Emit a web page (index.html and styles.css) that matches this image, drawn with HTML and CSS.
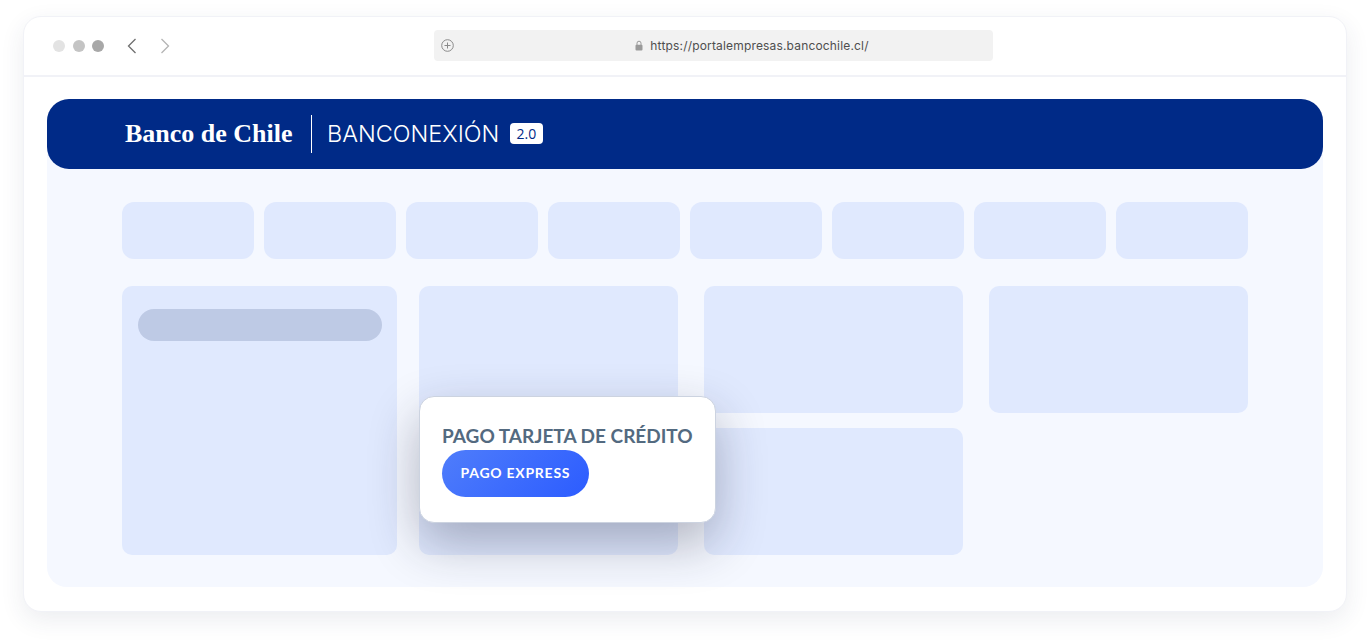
FILE: index.html
```html
<!DOCTYPE html>
<html lang="es">
<head>
  <meta charset="UTF-8">
  <meta name="viewport" content="width=device-width, initial-scale=1.0">
  <title>Banconexión 2.0</title>
  <link rel="stylesheet" href="styles.css">
</head>
<body>
  <div class="browser">
    <div class="toolbar">
      <div class="dots">
        <span class="dot dot-light"></span>
        <span class="dot dot-mid"></span>
        <span class="dot dot-dark"></span>
      </div>
      <div class="nav">
        <svg class="nav-back" width="10" height="16" viewBox="0 0 10 16"><path d="M8.5 1 1.5 8l7 7" fill="none" stroke="#6f6f6f" stroke-width="1.3"/></svg>
        <svg class="nav-next" width="10" height="16" viewBox="0 0 10 16"><path d="M1.5 1l7 7-7 7" fill="none" stroke="#b4b4b4" stroke-width="1.3"/></svg>
      </div>
      <div class="address">
        <svg class="address-plus" width="13" height="13" viewBox="0 0 13 13"><circle cx="6.5" cy="6.5" r="5.8" fill="none" stroke="#8a8a8a" stroke-width="1"/><path d="M6.5 3.5v6M3.5 6.5h6" stroke="#8a8a8a" stroke-width="1"/></svg>
        <div class="address-url">
          <svg width="8" height="11" viewBox="0 0 8 11"><path d="M2 5V3.2a2 2 0 0 1 4 0V5" fill="none" stroke="#9a9a9a" stroke-width="1"/><rect x="0.5" y="4.8" width="7" height="5.7" rx="1" fill="#9a9a9a"/></svg>
          <span>https://portalempresas.bancochile.cl/</span>
        </div>
      </div>
    </div>

    <div class="app">
      <header class="app-header">
        <span class="bank-name">Banco de Chile</span>
        <span class="header-sep"></span>
        <span class="product-name">BANCONEXIÓN</span>
        <span class="version">2.0</span>
      </header>

      <div class="app-body">
        <div class="tabs">
          <div class="tab"></div>
          <div class="tab"></div>
          <div class="tab"></div>
          <div class="tab"></div>
          <div class="tab"></div>
          <div class="tab"></div>
          <div class="tab"></div>
          <div class="tab"></div>
        </div>

        <div class="content">
          <div class="block sidebar">
            <div class="pill"></div>
          </div>
          <div class="cards">
            <div class="block block-tall">
              <div class="popup">
                <h3 class="popup-title">PAGO TARJETA DE CRÉDITO</h3>
                <a class="popup-btn">PAGO EXPRESS</a>
              </div>
            </div>
            <div class="block"></div>
            <div class="block"></div>
            <div class="block"></div>
          </div>
        </div>
      </div>
    </div>
  </div>
</body>
</html>
```

FILE: styles.css
```css
:root {
  --frame-line: #f1f2f7;
  --panel-bg: #f5f8ff;
  --block-bg: #e0e9fe;
  --navy: #002a87;
}
* { box-sizing: border-box; }
html, body { height: 100%; }
body {
  margin: 0;
  padding: 16px 23px 0;
  background: #fff;
  overflow: hidden;
  font-family: "Liberation Sans", Arial, sans-serif;
}
.browser {
  height: 596px;
  background: #fff;
  border: 1px solid var(--frame-line);
  border-radius: 18px;
  box-shadow: 0 8px 24px rgba(40, 50, 90, 0.09);
}
.toolbar {
  display: flex;
  align-items: center;
  height: 60px;
  padding: 0 29px;
  border-bottom: 2px solid var(--frame-line);
  position: relative;
}
.dots { display: flex; gap: 7.5px; }
.dot { width: 12px; height: 12px; border-radius: 50%; }
.dot-light { background: #e3e3e3; }
.dot-mid { background: #c4c4c4; }
.dot-dark { background: #a8a8a8; }
.nav { display: flex; gap: 23px; margin-left: 22.5px; }
.nav svg { display: block; }
.address {
  display: flex;
  align-items: center;
  justify-content: center;
  width: 559px;
  height: 31px;
  margin: 0 0 2px 264px;
  padding-left: 78px;
  background: #f2f2f2;
  border-radius: 4px;
  position: relative;
  font-size: 12px;
  color: #4e4e4e;
}
.address-plus { position: absolute; left: 7px; top: 9px; }
.address-url { display: flex; align-items: center; gap: 7px; letter-spacing: 0.17px; font-family: Inter, "Liberation Sans", sans-serif; }

.app {
  margin: 22px 23px 0;
  height: 488px;
  background: var(--panel-bg);
  border-radius: 24px 24px 20px 20px;
}
.app-header {
  display: flex;
  align-items: center;
  height: 70px;
  padding-left: 78px;
  background: var(--navy);
  border-radius: 22px;
  color: #fff;
}
.bank-name {
  width: 169px;
  font-family: "Liberation Serif", serif;
  font-weight: 700;
  font-size: 26px;
  white-space: nowrap;
}
.header-sep {
  width: 1px;
  height: 38px;
  margin: 0 15px 0 17px;
  background: #fff;
}
.product-name {
  width: 172px;
  margin-bottom: 2px;
  font-family: Inter, sans-serif;
  font-weight: 300;
  font-size: 23.4px;
  white-space: nowrap;
}
.version {
  margin: 0 0 1px 11px;
  padding: 0 6.5px;
  height: 21px;
  line-height: 21px;
  background: #fff;
  border-radius: 4px;
  color: var(--navy);
  font-family: "Open Sans", sans-serif;
  font-size: 14px;
}
.app-body { padding: 33px 75px 0; }
.tabs { display: flex; gap: 10px; }
.tab {
  width: 132px;
  height: 57px;
  background: var(--block-bg);
  border-radius: 12px;
}
.content { display: flex; gap: 22px; margin-top: 27px; }
.block {
  background: var(--block-bg);
  border-radius: 10px;
}
.sidebar {
  width: 275px;
  height: 269px;
  padding: 23px 15px 0 16px;
}
.pill {
  height: 32px;
  background: #becae5;
  border-radius: 16px;
}
.cards {
  display: grid;
  grid-template-columns: repeat(3, 259px);
  grid-template-rows: 126.5px 127px;
  gap: 15.5px 26px;
}
.block-tall { grid-row: span 2; position: relative; }
.popup {
  position: absolute;
  left: 0;
  top: 110px;
  width: 297px;
  height: 127px;
  padding: 25px 22px 0;
  background: #fff;
  border: 1px solid #ccd3e0;
  border-radius: 15px;
  box-shadow: 0 20px 50px rgba(30, 35, 60, 0.32);
  z-index: 2;
}
.popup-title {
  margin: 0;
  font-family: Lato, sans-serif;
  font-weight: 700;
  font-size: 19px;
  line-height: 28px;
  color: #536a80;
  white-space: nowrap;
}
.popup-btn {
  display: inline-block;
  height: 47px;
  line-height: 45px;
  padding: 0 18.5px;
  border-radius: 24px;
  background: linear-gradient(135deg, #4f7dfb, #2c5cff);
  color: #fff;
  font-family: Lato, sans-serif;
  font-weight: 700;
  font-size: 14px;
  letter-spacing: 0.75px;
}
```
